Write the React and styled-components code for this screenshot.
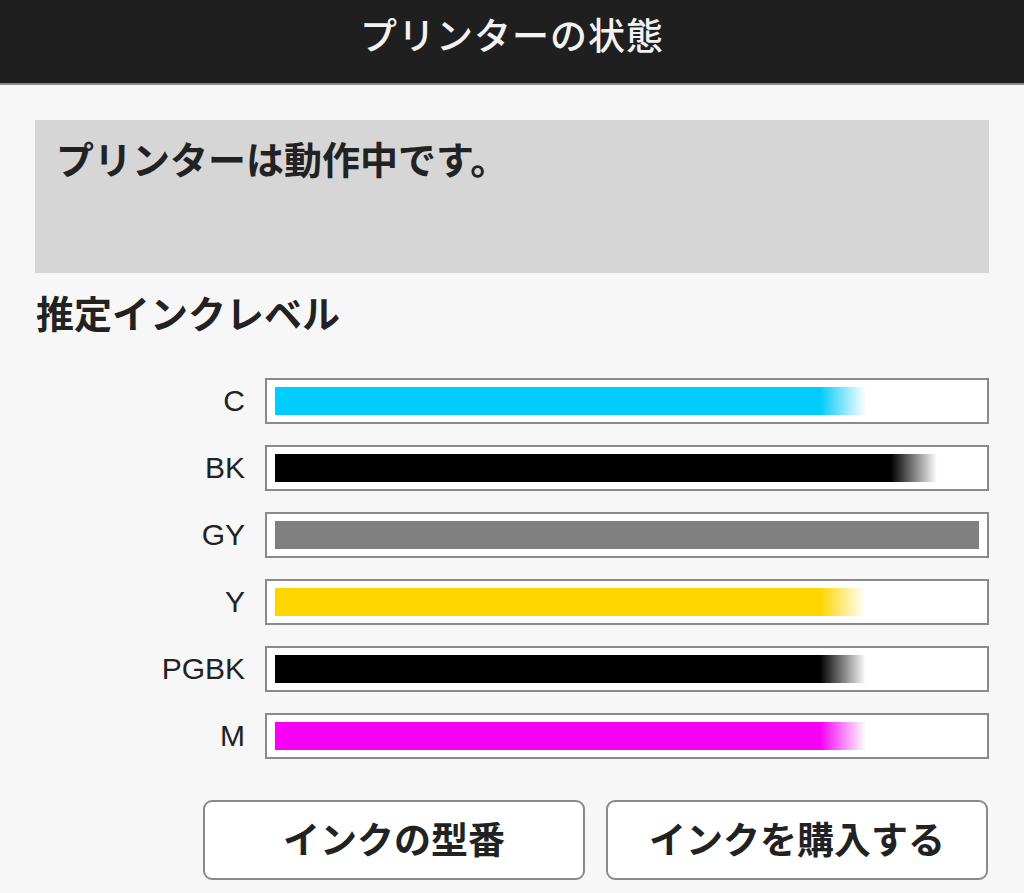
import React from 'react';
import styled, { createGlobalStyle } from 'styled-components';

const GlobalStyle = createGlobalStyle`
    html, body {
        margin: 0;
        padding: 0;
        background-color: #f7f7f7;
        font-family: "Noto Sans CJK JP", "Noto Sans", "Liberation Sans", sans-serif;
    }
`

const Header = styled.div`
    background-color: #1f1f1f;
    border-bottom: 2px solid #8c8c8c;
    height: 83px;
    display: flex;
    justify-content: center;
    align-items: center;

    h1 {
        margin: 0;
        margin-top: -16px;
        color: #f2f2f2;
        font-size: 37px;
        font-weight: 500;
        letter-spacing: 1px;
    }
`

const Content = styled.div`
    padding: 35px 35px 0 35px;
    display: flex;
    flex-direction: column;
`

const Status = styled.div`
    background-color: #d6d6d6;
    height: 153px;
    box-sizing: border-box;
    padding: 15px 21px;

    p {
        margin: 0;
        color: #222;
        font-size: 38px;
        font-weight: 700;
        line-height: 1.2;
    }
`

const Title = styled.h2`
    margin: 16px 0 0 1px;
    color: #222;
    font-size: 38px;
    font-weight: 700;
    line-height: 1.2;
`

const Levels = styled.div`
    margin-top: 43px;
    display: flex;
    flex-direction: column;
    gap: 21px;
`

const Row = styled.div`
    display: grid;
    grid-template-columns: 210px 1fr;
    column-gap: 20px;
    align-items: center;
`

const Label = styled.span`
    text-align: right;
    font-family: "Liberation Sans", Arial, sans-serif;
    font-size: 30px;
    color: #222;
`

const Frame = styled.div`
    height: 46px;
    box-sizing: border-box;
    border: 2px solid #8a8a8a;
    background-color: #fff;
    padding: 7px 8px;
`

const Fill = styled.div`
    height: 28px;
    background: ${p => p.$fade
        ? `linear-gradient(to right, ${p.$color} calc(100% - 46px), rgba(255,255,255,0) 100%)`
        : p.$color};
`

const Buttons = styled.div`
    margin-top: 41px;
    display: flex;
    justify-content: flex-end;
    gap: 21px;
    padding-right: 1px;
`

const Button = styled.button`
    width: 382px;
    height: 80px;
    background-color: #fff;
    border: 2px solid #8a8a8a;
    border-radius: 9px;
    font-family: "Noto Sans CJK JP", sans-serif;
    font-size: 37px;
    font-weight: 700;
    color: #222;
    padding: 0;
    padding-bottom: 4px;
`

const inks = [
    { name: 'C', color: '#00cdfc', level: 84, fade: true },
    { name: 'BK', color: '#000000', level: 94, fade: true },
    { name: 'GY', color: '#808080', level: 100, fade: false },
    { name: 'Y', color: '#fdd600', level: 84, fade: true },
    { name: 'PGBK', color: '#000000', level: 84, fade: true },
    { name: 'M', color: '#f500f5', level: 84, fade: true },
]

export default function App() {
    return (
        <>
            <GlobalStyle />
            <Header>
                <h1>プリンターの状態</h1>
            </Header>
            <Content>
                <Status>
                    <p>プリンターは動作中です。</p>
                </Status>
                <Title>推定インクレベル</Title>
                <Levels>
                    {inks.map(ink => (
                        <Row key={ink.name}>
                            <Label>{ink.name}</Label>
                            <Frame>
                                <Fill $color={ink.color} $fade={ink.fade} style={{ width: `${ink.level}%` }} />
                            </Frame>
                        </Row>
                    ))}
                </Levels>
                <Buttons>
                    <Button>インクの型番</Button>
                    <Button>インクを購入する</Button>
                </Buttons>
            </Content>
        </>
    )
}
